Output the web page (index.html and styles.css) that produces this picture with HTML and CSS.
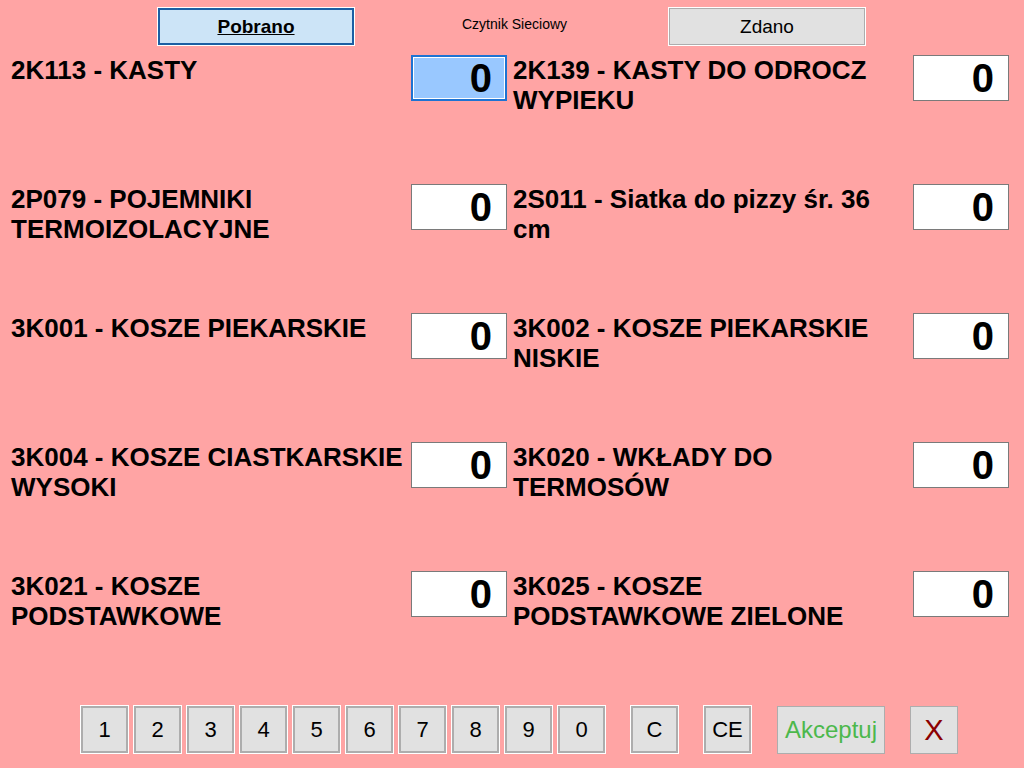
FILE: index.html
```html
<!DOCTYPE html>
<html lang="pl">
<head>
    <meta charset="UTF-8">
    <title>Zwrot opakowań</title>
    <link rel="stylesheet" href="styles.css">
</head>
<body>
    <div class="topbar">
        <button class="tab tab-active">Pobrano</button>
        <span class="reader">Czytnik Sieciowy</span>
        <button class="tab">Zdano</button>
    </div>

    <div class="items">
        <div class="item">
            <div class="label">2K113 - KASTY</div>
            <div class="qty qty-focus">0</div>
        </div>
        <div class="item">
            <div class="label">2K139 - KASTY DO ODROCZ WYPIEKU</div>
            <div class="qty">0</div>
        </div>
        <div class="item">
            <div class="label">2P079 - POJEMNIKI TERMOIZOLACYJNE</div>
            <div class="qty">0</div>
        </div>
        <div class="item">
            <div class="label">2S011 - Siatka do pizzy śr. 36 cm</div>
            <div class="qty">0</div>
        </div>
        <div class="item">
            <div class="label">3K001 - KOSZE PIEKARSKIE</div>
            <div class="qty">0</div>
        </div>
        <div class="item">
            <div class="label">3K002 - KOSZE PIEKARSKIE NISKIE</div>
            <div class="qty">0</div>
        </div>
        <div class="item">
            <div class="label">3K004 - KOSZE CIASTKARSKIE WYSOKI</div>
            <div class="qty">0</div>
        </div>
        <div class="item">
            <div class="label">3K020 - WKŁADY DO TERMOSÓW</div>
            <div class="qty">0</div>
        </div>
        <div class="item">
            <div class="label">3K021 - KOSZE PODSTAWKOWE</div>
            <div class="qty">0</div>
        </div>
        <div class="item">
            <div class="label">3K025 - KOSZE PODSTAWKOWE ZIELONE</div>
            <div class="qty">0</div>
        </div>
    </div>

    <div class="keypad">
        <div class="digits">
            <button class="key">1</button>
            <button class="key">2</button>
            <button class="key">3</button>
            <button class="key">4</button>
            <button class="key">5</button>
            <button class="key">6</button>
            <button class="key">7</button>
            <button class="key">8</button>
            <button class="key">9</button>
            <button class="key">0</button>
        </div>
        <button class="key">C</button>
        <button class="key">CE</button>
        <button class="key key-flat key-accept">Akceptuj</button>
        <button class="key key-flat key-close">X</button>
    </div>
</body>
</html>
```

FILE: styles.css
```css
body {
    margin: 0;
    width: 1024px;
    height: 768px;
    overflow: hidden;
    background-color: #ffa4a4;
    font-family: "Liberation Sans", Arial, sans-serif;
    color: #000;
}
button {
    font-family: "Liberation Sans", Arial, sans-serif;
    color: #000;
    padding: 0;
    cursor: pointer;
}

/* top bar */
.topbar {
    display: flex;
    align-items: flex-start;
    padding: 7px 0 0 157px;
    height: 39px;
}
.tab {
    width: 198px;
    height: 39px;
    border: 1px solid #fff;
    box-shadow: inset 0 0 0 1px #adadad;
    background-color: #e1e1e1;
    font-size: 19px;
}
.tab-active {
    box-shadow: inset 0 0 0 2px #1b5fa3;
    background-color: #cce4f7;
    font-weight: bold;
    text-decoration: underline;
}
.reader {
    width: 313px;
    padding-left: 107px;
    box-sizing: border-box;
    margin-top: 9px;
    font-size: 14px;
}

/* items */
.items {
    display: grid;
    grid-template-columns: 496px 496px;
    grid-auto-rows: 46px;
    column-gap: 6px;
    row-gap: 83px;
    padding-left: 11px;
    margin-top: 9px;
}
.item {
    display: flex;
    align-items: flex-start;
    height: 46px;
}
.label {
    width: 393px;
    font-size: 26px;
    font-weight: bold;
    line-height: 30px;
}
.qty {
    margin-left: auto;
    width: 96px;
    height: 46px;
    box-sizing: border-box;
    border: 1px solid #7a7a7a;
    background-color: #fff;
    text-align: right;
    padding-right: 14px;
    font-size: 40px;
    font-weight: bold;
    line-height: 44px;
}
.qty-focus {
    border: 2px solid #1e73d2;
    box-shadow: inset 0 0 0 1px #fff;
    background-color: #99c8ff;
    padding-right: 13px;
    line-height: 42px;
}

/* keypad */
.keypad {
    display: flex;
    align-items: flex-start;
    gap: 24px;
    padding-left: 80px;
    margin-top: 88px;
}
.digits {
    display: flex;
    gap: 4px;
}
.key {
    width: 49px;
    height: 49px;
    border: 1px solid #fff;
    box-shadow: inset 0 0 0 2px #adadad;
    background-color: #e1e1e1;
    font-size: 22px;
}
.key-flat {
    margin-top: 1px;
    height: 48px;
    border: 1px solid #adadad;
    box-shadow: none;
}
.key-accept {
    width: 108px;
    margin-left: 1px;
    color: #4cb84c;
    font-size: 24px;
}
.key-close {
    width: 48px;
    margin-left: 1px;
    color: #8b0000;
    font-size: 29px;
}
```
